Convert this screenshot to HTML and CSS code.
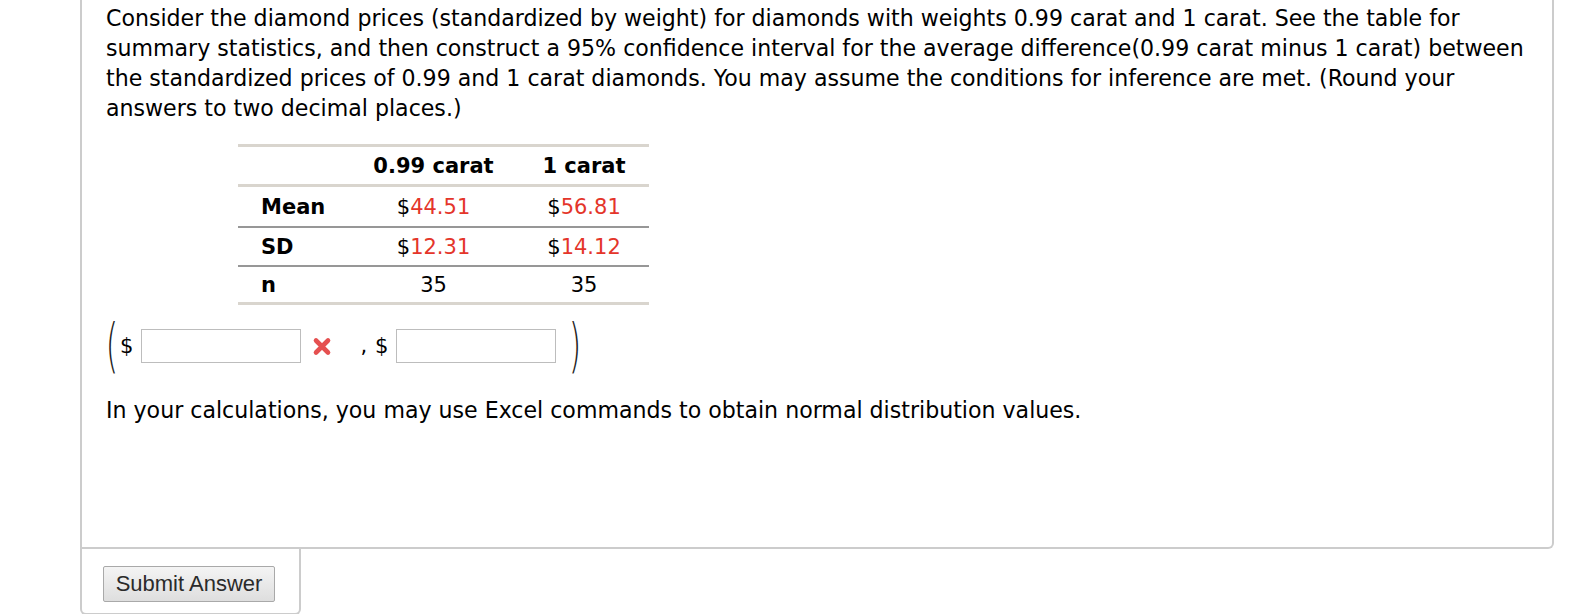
FILE: index.html
```html
<!DOCTYPE html>
<html>
<head>
<meta charset="utf-8">
<link rel="stylesheet" href="styles.css">
</head>
<body>
<div class="question">
  <p class="intro">Consider the diamond prices (standardized by weight) for diamonds with weights 0.99 carat and 1 carat. See the table for summary statistics, and then construct a 95% confidence interval for the average difference(0.99 carat minus 1 carat) between the standardized prices of 0.99 and 1 carat diamonds. You may assume the conditions for inference are met. (Round your answers to two decimal places.)</p>
  <table class="stats">
    <thead>
      <tr><th class="label"></th><th class="c2">0.99 carat</th><th class="c3">1 carat</th></tr>
    </thead>
    <tbody>
      <tr class="r1"><td class="label">Mean</td><td class="c2">$<span class="red">44.51</span></td><td class="c3">$<span class="red">56.81</span></td></tr>
      <tr class="r2"><td class="label">SD</td><td class="c2">$<span class="red">12.31</span></td><td class="c3">$<span class="red">14.12</span></td></tr>
      <tr class="r3"><td class="label">n</td><td class="c2">35</td><td class="c3">35</td></tr>
    </tbody>
  </table>
  <div class="answer">
    <span class="paren">(</span>
    <span class="dollar">$</span>
    <input class="box" type="text">
    <svg class="wrong" width="20" height="19" viewBox="0 0 20 19"><path d="M4 3.5 L16 15.5 M16 3.5 L4 15.5" stroke="#e55050" stroke-width="4.6" stroke-linecap="round" fill="none"/></svg>
    <span class="comma">,</span>
    <span class="dollar d2">$</span>
    <input class="box" type="text">
    <span class="paren close">)</span>
  </div>
  <p class="note">In your calculations, you may use Excel commands to obtain normal distribution values.</p>
</div>
<div class="submit-wrap">
  <button class="submit" type="button">Submit Answer</button>
</div>
</body>
</html>
```
FILE: styles.css
```css
html, body {
  margin: 0;
  padding: 0;
  background: #ffffff;
}
body {
  font-family: "DejaVu Sans", Verdana, sans-serif;
  color: #000;
  font-size: 22.1px;
}
.question {
  margin-left: 80px;
  border-left: 2px solid #cccccc;
  border-right: 2px solid #cccccc;
  border-bottom: 2px solid #cccccc;
  border-bottom-right-radius: 6px;
  padding: 3px 0 0 24px;
  box-sizing: content-box;
  width: 1446px;
  height: 544px;
}
.intro {
  margin: 0;
  width: 1424px;
  line-height: 30px;
}
.stats {
  border-collapse: collapse;
  margin: 21px 0 0 132px;
  font-size: 21px;
}
.stats thead tr {
  border-top: 3px solid #d9d5ce;
  border-bottom: 3px solid #d9d5ce;
}
.stats th {
  font-weight: bold;
  height: 37px;
  padding: 0;
}
.stats td {
  padding: 0;
}
.stats .r1 td { height: 39px; }
.stats .r2 td { height: 37px; }
.stats .r3 td { height: 35px; }
.stats .r1, .stats .r2 {
  border-bottom: 2px solid #979797;
}
.stats .r3 {
  border-bottom: 3px solid #d9d5ce;
}
.stats .label {
  width: 87px;
  padding-left: 23px;
  text-align: left;
  font-weight: bold;
}
.stats .c2 {
  width: 171px;
  text-align: center;
}
.stats .c3 {
  width: 130px;
  text-align: center;
}
.red {
  color: #e4352a;
}
.answer {
  display: flex;
  align-items: center;
  margin-top: 16px;
  height: 50px;
  font-size: 21px;
}
.paren {
  font-family: "DejaVu Sans", sans-serif;
  font-weight: 200;
  font-size: 58px;
  line-height: 50px;
  color: #222;
  transform: scaleX(0.55);
  display: inline-block;
  width: 12px;
  text-align: center;
}
.answer > .paren:first-child {
  margin-left: -3px;
}
.dollar {
  margin-left: 5px;
}
.box {
  width: 160px;
  height: 34px;
  box-sizing: border-box;
  border: 1px solid #bdbdbd;
  margin: 0 0 0 8px;
  padding: 0;
  font-size: 18px;
}
.wrong {
  margin-left: 11px;
}
.comma {
  margin-left: 28px;
}
.d2 {
  margin-left: 8px;
}
.box + .close {
  margin-left: 10px;
}
.note {
  margin: 24px 0 0 0;
  line-height: 30px;
}
.submit-wrap {
  margin-left: 80px;
  width: 196px;
  height: 47px;
  border-left: 2px solid #cccccc;
  border-right: 2px solid #cccccc;
  border-bottom: 2px solid #cccccc;
  border-bottom-left-radius: 6px;
  border-bottom-right-radius: 6px;
  padding: 17px 0 0 21px;
}
.submit {
  width: 172px;
  height: 36px;
  font-family: "Liberation Sans", Arial, sans-serif;
  font-size: 22px;
  color: #2a2a2a;
  background: linear-gradient(#f4f4f4, #dedede);
  border: 1px solid #a9a9a9;
  border-radius: 2px;
  padding: 0;
}
```
